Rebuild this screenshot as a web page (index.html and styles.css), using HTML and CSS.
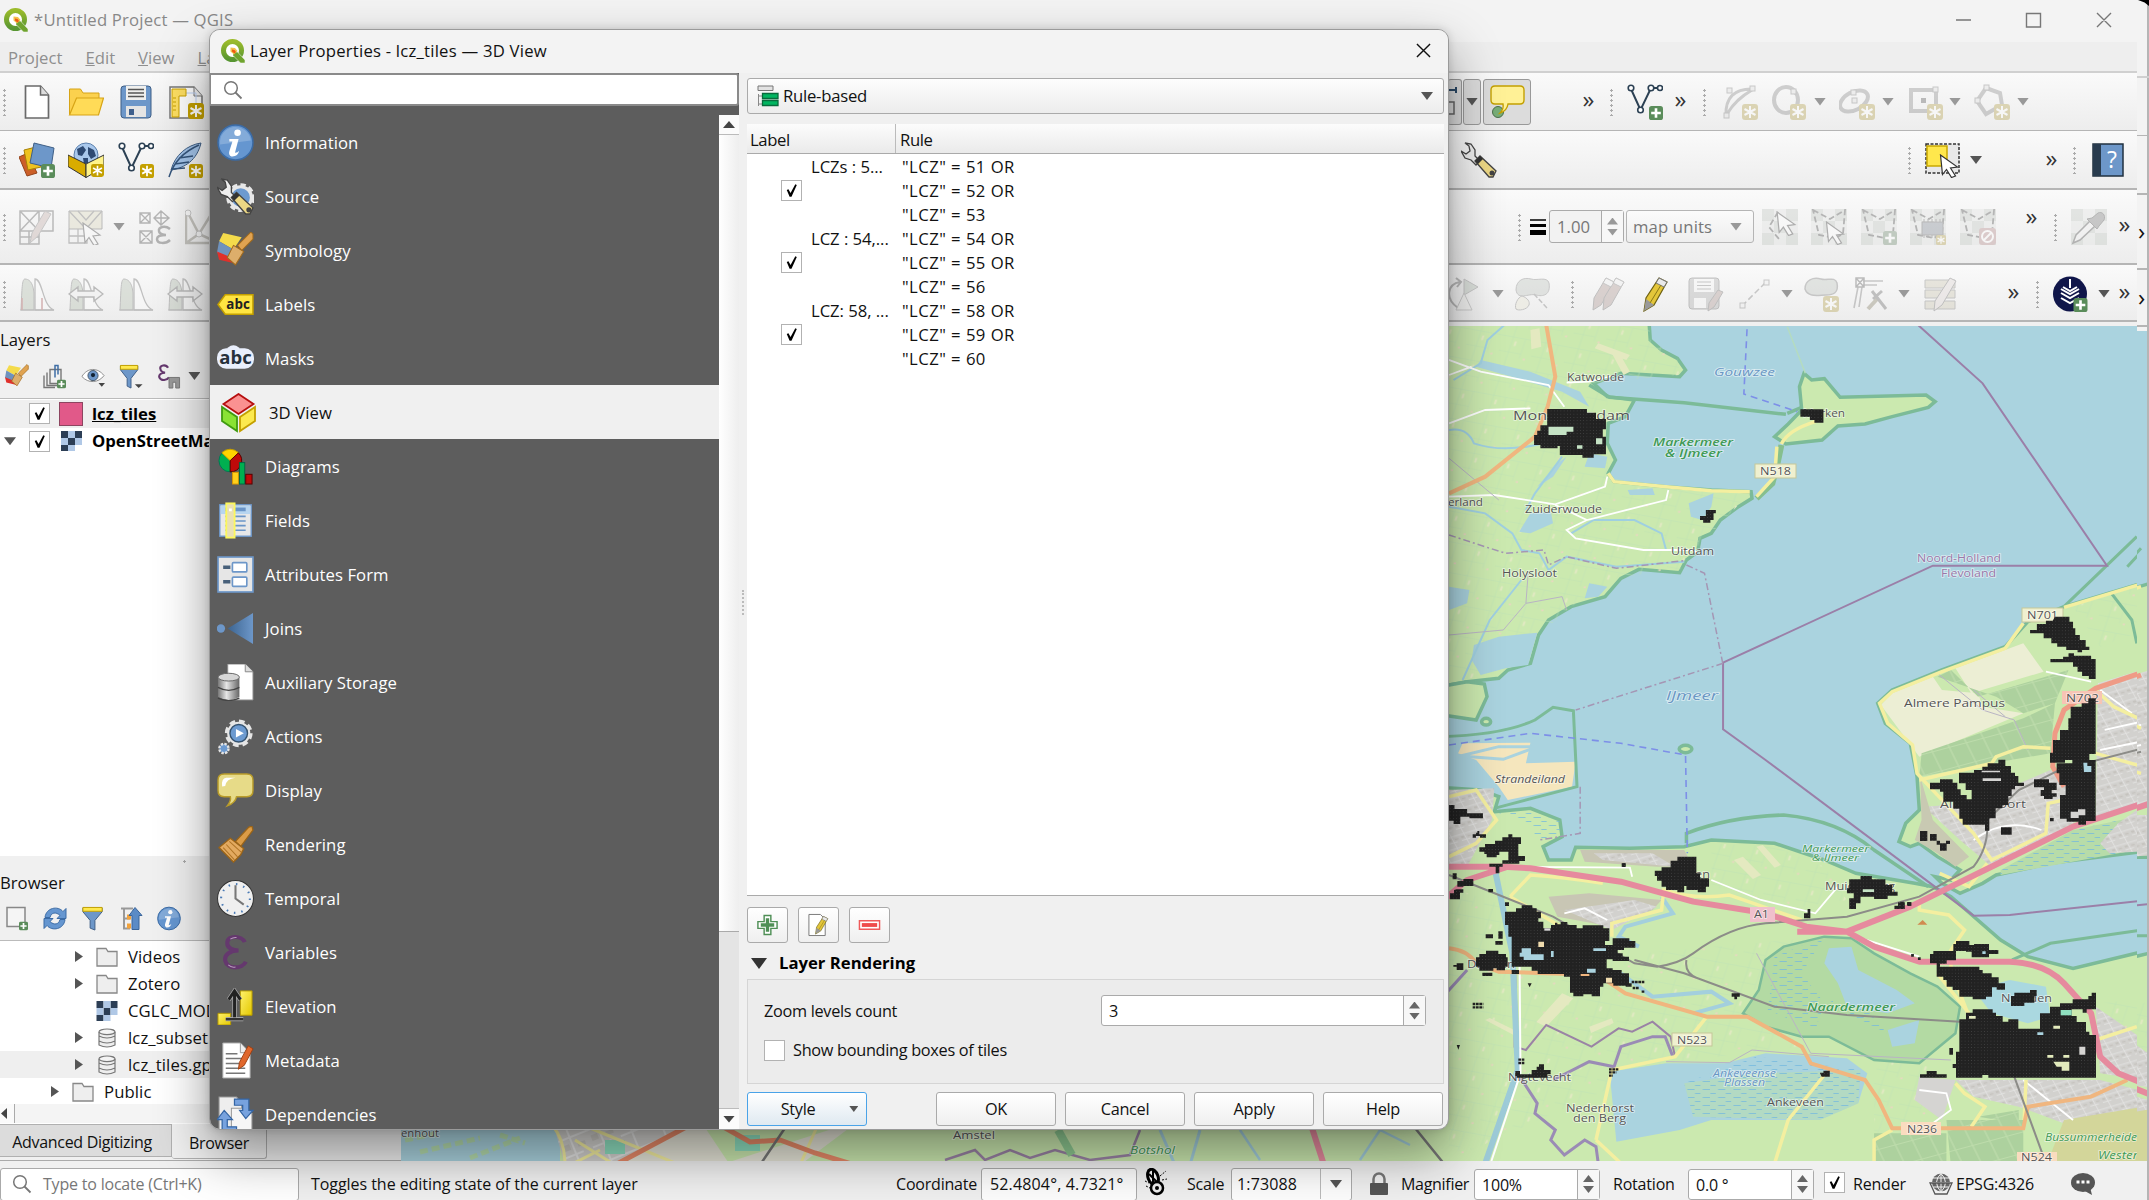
FILE: index.html
```html
<!DOCTYPE html>
<html lang="en">
<head>
<meta charset="utf-8">
<title>QGIS - Layer Properties</title>
<link rel="stylesheet" href="styles.css">
</head>
<body>
<svg class="defs" width="0" height="0">
  <defs>
    <linearGradient id="gMetal" x1="0" x2="1"><stop offset="0" stop-color="#777"/><stop offset=".4" stop-color="#e6e6e6"/><stop offset="1" stop-color="#666"/></linearGradient>
    <linearGradient id="gJoin" x1="0" x2="1"><stop offset="0" stop-color="#3c6490"/><stop offset="1" stop-color="#6d97c9"/></linearGradient>
    <linearGradient id="gYel" x1="0" x2="1" y1="0" y2="1"><stop offset="0" stop-color="#fff16b"/><stop offset="1" stop-color="#e3c800"/></linearGradient>
    <linearGradient id="gQ" x1="0" x2="0" y1="0" y2="1"><stop offset="0" stop-color="#9bbb2b"/><stop offset="1" stop-color="#589632"/></linearGradient>

    <symbol id="qgis" viewBox="0 0 24 24"><ellipse cx="11.500" cy="11.500" rx="9" ry="9" fill="#fff" stroke="url(#gQ)" stroke-width="5"/><path d="M12 13h4.500l7.500 8v3h-4.500L12 16.500z" fill="#6fa32e" stroke="#fff" stroke-width=".5"/><path d="M9.500 8.500l4.500.5 2.500 3-3.500 3.500-3.500-3z" fill="#f3c04c"/><path d="M11 10.500l2.500.5 1.500 2-1.500 1.500-2.500-2z" fill="#ee5a13"/></symbol>
    <symbol id="star" viewBox="0 0 16 16"><rect width="16" height="16" rx="3" fill="#c4a000"/><path d="M8 2v12M2.500 5l11 6M13.500 5l-11 6" stroke="#fff" stroke-width="2"/></symbol>
    <symbol id="plus" viewBox="0 0 16 16"><rect width="16" height="16" rx="3" fill="#5a8c5a"/><path d="M8 2.500v11M2.500 8h11" stroke="#fff" stroke-width="3"/></symbol>

    <symbol id="new" viewBox="0 0 36 36"><path d="M6.500 2h15l8 9v23h-23z" fill="#fff" stroke="#6a6a6a" stroke-width="1.700"/><path d="M21.500 2v9h8" fill="#ddd" stroke="#6a6a6a" stroke-width="1.500"/></symbol>
    <symbol id="open" viewBox="0 0 36 36"><path d="M1.500 30V5h11l2.500 4h16v6" fill="#fbd14e" stroke="#d7a416"/><path d="M1.500 31l7-17h27l-5 17z" fill="#ffdb57" stroke="#d7a416" stroke-width="1.200"/></symbol>
    <symbol id="save" viewBox="0 0 36 36"><rect x="3" y="2" width="30" height="32" rx="3" fill="#6d97c9" stroke="#3f5f86"/><path d="M8 2h20v14h-20z" fill="#f0f0ee"/><path d="M10 5.500h16M10 9h16M10 12.500h16" stroke="#555" stroke-width="1.300"/><rect x="8" y="22" width="20" height="11" fill="#e4e4e4"/><rect x="11" y="25" width="5" height="6" fill="#3e5f8c"/></symbol>
    <symbol id="layout" viewBox="0 0 36 36"><path d="M2 3h24l8 9v22h-32z" fill="#fff" stroke="#777" stroke-width="1.500"/><path d="M26 3v9h8" fill="#eee" stroke="#777"/><path d="M8 9h20v18" fill="none" stroke="#bcd1f5"/><path d="M4 5h14v7h-7v21h-7z" fill="#ffe063" stroke="#c9a000"/><path d="M5 14h3M5 18h3M5 22h3M5 26h3" stroke="#c9a000"/><use href="#star" x="20" y="19" width="16" height="16"/></symbol>
    <symbol id="dsm" viewBox="0 0 36 36"><path d="M0 15l9-4 9 20-10 3z" fill="#cc5f28" stroke="#94431a"/><path d="M5 8l12-3 5 20-13 3z" fill="#eec21f" stroke="#a88206"/><path d="M15 1l20 5-3 20-21-5z" fill="#6d97c9" stroke="#3f5f86"/><use href="#plus" x="22" y="22" width="14" height="14"/></symbol>
    <symbol id="gpkg" viewBox="0 0 36 36"><circle cx="18" cy="13" r="12" fill="#a9c8ec" stroke="#5c80ac"/><path d="M9 7l6-3 3 4-4 6-4-1zM20 5l6 3 2 6-5 3-3-5zM15 16l5 0 0 5-4 1z" fill="#2e4a73"/><path d="M0 13l18 9v13.500l-18-11z" fill="#d9ac00" stroke="#333"/><path d="M18 22l18-9v12l-18 10.500z" fill="#fff38b" stroke="#333"/><use href="#star" x="23" y="22" width="13" height="13"/></symbol>
    <symbol id="vee" viewBox="0 0 36 36"><path d="M4 5l9.500 21L24 4h9" fill="none" stroke="#2c4154" stroke-width="2"/><g fill="#fff" stroke="#2c4154" stroke-width="1.600"><circle cx="4" cy="4" r="2.800"/><circle cx="13.500" cy="26" r="2.800"/><circle cx="24" cy="4" r="2.800"/><circle cx="33" cy="4" r="2.500"/></g></symbol>
    <symbol id="newshp" viewBox="0 0 36 36"><use href="#vee"/><use href="#star" x="22" y="22" width="14" height="14"/></symbol>
    <symbol id="veeplus" viewBox="0 0 36 36"><use href="#vee"/><use href="#plus" x="22" y="22" width="14" height="14"/></symbol>
    <symbol id="feather" viewBox="0 0 36 36"><path d="M34 1C20 3 8 13 4 28c14-2 26-10 30-27z" fill="#a3c4ea" stroke="#3f5f86"/><path d="M2 35C6 22 16 10 32 3M8 22l14-2M12 16l14-2M6 27l12-1" fill="none" stroke="#35557c" stroke-width="1.500"/><use href="#star" x="22" y="22" width="14" height="14"/></symbol>
    <symbol id="pen" viewBox="0 0 36 36"><path d="M22 2l8 4-13 23-10 6 2-13z" fill="#e4c63a" stroke="#6e6112" stroke-width="1.200"/><path d="M22 2l8 4-3 5-8-4z" fill="#e9e9e9" stroke="#777"/><path d="M9 23l8 6-10 6z" fill="#999"/><path d="M24 9L13 27" stroke="#8c7a17"/></symbol>
    <symbol id="meshedit" viewBox="0 0 36 36"><path d="M1 2h33v20h-14v13h-19zM1 2l19 20M20 2L1 22h19V2M1 28h19M10 22v13" fill="none" stroke="#555" stroke-width="1.500"/><path d="M26 2l6 3-13 22-8 7 2-10z" fill="#cfa9a0" stroke="#777"/></symbol>
    <symbol id="cursor" viewBox="0 0 20 24"><path d="M1 1l17 12-7 1 5 8-4 1.500-5-8-4 5z" fill="#fff" stroke="#333" stroke-width="1.200"/></symbol>
    <symbol id="meshsel" viewBox="0 0 36 36"><path d="M1 2h33v18h-33z" fill="#ddd6a4" stroke="#555"/><path d="M1 2l17 18L34 2M10 2l8 9 8-9M1 20v14h18V20M1 27h18M10 20v14" fill="none" stroke="#666" stroke-width="1.300"/><use href="#cursor" x="14" y="13" width="20" height="24"/></symbol>
    <symbol id="meshexp" viewBox="0 0 36 36"><path d="M4 4h10v10h-10zl10 10M14 4L4 14M4 22h12v12h-12zl12 12M16 22L4 34M25 2l8 7-8 7-7-7zM18 9h15M25 2v14" fill="none" stroke="#444" stroke-width="1.400"/><path d="M34 20c-5-4-12-2-11 2 0 3 5 4 7 4-4 0-9 1-9 4 0 5 9 5 13 1" fill="none" stroke="#444" stroke-width="2.500"/></symbol>
    <symbol id="meshtri" viewBox="0 0 36 36"><path d="M1 3v31h34V3M3 4l11 21L27 4M1 34l13-9 20 9" fill="none" stroke="#777056" stroke-width="2.500"/><circle cx="3" cy="4" r="3" fill="#fff" stroke="#777"/><circle cx="14" cy="25" r="3" fill="#fff" stroke="#777"/></symbol>
    <symbol id="hist" viewBox="0 0 36 36"><path d="M2 34C3 12 3 3 6 3s8 2 9 14v17z" fill="#a9bfa0" stroke="#666"/><path d="M16 34V3c8 0 7 27 19 31z" fill="#fff" stroke="#666" stroke-width="1.300"/><path d="M1 34h34" stroke="#666"/></symbol>
    <symbol id="histred" viewBox="0 0 36 36"><use href="#hist"/><path d="M3 22v12M23 22v12" stroke="#d33" stroke-width="1.500"/></symbol>
    <symbol id="histarr" viewBox="0 0 36 36"><use href="#hist"/><path d="M1 18l9-7v4h16v-4l9 7-9 7v-4H10v4z" fill="#eee" stroke="#555" stroke-width="1.400"/></symbol>

    <symbol id="callout" viewBox="0 0 36 36"><circle cx="9" cy="28" r="5.500" fill="#77ad77" stroke="#4b6e4b"/><path d="M6 2h25q4 0 4 4v10q0 4-4 4H19q-1 7-8 9 4-4 3-9H6q-4 0-4-4V6q0-4 4-4z" fill="#fff196" stroke="#c4a000" stroke-width="1.400"/></symbol>
    <symbol id="arc" viewBox="0 0 36 36"><path d="M4 32C3 14 12 4 32 5M5 30C12 18 20 12 30 6" fill="none" stroke="#888" stroke-width="3"/><g fill="#ddd" stroke="#777"><rect x="2" y="29" width="5" height="5"/><rect x="5" y="4" width="5" height="5"/><rect x="28" y="2" width="5" height="5"/></g><use href="#star" x="20" y="20" width="16" height="16"/></symbol>
    <symbol id="circ" viewBox="0 0 36 36"><ellipse cx="16" cy="16" rx="12" ry="13" fill="none" stroke="#888" stroke-width="4"/><rect x="21" y="5" width="5" height="5" fill="#ddd" stroke="#777"/><use href="#star" x="20" y="20" width="16" height="16"/></symbol>
    <symbol id="elli" viewBox="0 0 36 36"><ellipse cx="15" cy="17" rx="15" ry="9" transform="rotate(-28 15 17)" fill="none" stroke="#888" stroke-width="4"/><rect x="12" y="6" width="5" height="5" fill="#ddd" stroke="#777"/><rect x="13" y="14" width="5" height="5" fill="#ddd" stroke="#777"/><use href="#star" x="20" y="20" width="16" height="16"/></symbol>
    <symbol id="rct" viewBox="0 0 36 36"><rect x="4" y="6" width="25" height="21" fill="none" stroke="#888" stroke-width="4"/><rect x="14" y="14" width="5" height="5" fill="#555"/><rect x="26" y="3" width="5" height="5" fill="#ddd" stroke="#777"/><use href="#star" x="20" y="20" width="16" height="16"/></symbol>
    <symbol id="pent" viewBox="0 0 36 36"><path d="M12 4l14 5 2 12-16 9-9-13z" fill="none" stroke="#888" stroke-width="4"/><rect x="10" y="1" width="5" height="5" fill="#ddd" stroke="#777"/><rect x="1" y="14" width="5" height="5" fill="#ddd" stroke="#777"/><use href="#star" x="20" y="20" width="16" height="16"/></symbol>
    <symbol id="wrench" viewBox="0 0 36 36"><path d="M4 1l6 1 4 6v6l5 5-4 4-5-5-6-2-4-7 5 3 4-3-1-5z" fill="#eee" stroke="#444" stroke-width="1.300"/><path d="M14 19l5-5 16 15-3 6h-4z" fill="#ecd784" stroke="#444" stroke-width="1.300"/><path d="M14 19l5-5 3 3-5 5z" fill="#333"/><circle cx="31" cy="31" r="2.500" fill="#444"/></symbol>
    <symbol id="select" viewBox="0 0 36 36"><rect x="1" y="2" width="33" height="29" fill="#e8e8e8" stroke="#333" stroke-width="1.500" stroke-dasharray="3 1.500"/><rect x="2" y="4" width="20" height="20" fill="#ffe74c" stroke="#c8a800" stroke-width="1.500"/><use href="#cursor" x="14" y="12" width="21" height="24"/></symbol>
    <symbol id="book" viewBox="0 0 36 36"><rect x="3" y="2" width="30" height="32" fill="#6d97c9" stroke="#20303f" stroke-width="1.500"/><rect x="3" y="2" width="8" height="32" fill="#283b4e"/><text x="22" y="26" font-size="23" text-anchor="middle" fill="#fff">?</text></symbol>
    <symbol id="checker" viewBox="0 0 36 36"><path d="M0 0h12v12H0zM24 0h12v12H24zM12 12h12v12H12zM0 24h12v12H0zM24 24h12v12H24z" fill="#bcc6bc"/><path d="M12 0h12v12H12zM0 12h12v12H0zM24 12h12v12H24zM12 24h12v12H12z" fill="#dfe3df"/></symbol>
    <symbol id="tri1" viewBox="0 0 36 36"><use href="#checker"/><path d="M16 3L7 18l10 12" fill="none" stroke="#444" stroke-width="1.800" stroke-dasharray="6 3"/><use href="#cursor" x="14" y="2" width="21" height="25"/></symbol>
    <symbol id="quad" viewBox="0 0 36 36"><use href="#checker"/><path d="M2 1l17 9L34 1l-2 24-8 4-16-3z" fill="none" stroke="#444" stroke-width="1.800" stroke-dasharray="6 3"/></symbol>
    <symbol id="quadsel" viewBox="0 0 36 36"><use href="#quad"/><use href="#cursor" x="14" y="12" width="21" height="24"/></symbol>
    <symbol id="quadadd" viewBox="0 0 36 36"><use href="#quad"/><use href="#plus" x="22" y="22" width="14" height="14"/></symbol>
    <symbol id="quadmem" viewBox="0 0 36 36"><use href="#quad"/><rect x="12" y="13" width="21" height="13" fill="#7a869b" stroke="#555"/><path d="M14 10v19M18 10v19M22 10v19M26 10v19M30 10v19" stroke="#555" stroke-dasharray="3 13"/><use href="#star" x="26" y="26" width="10" height="10"/></symbol>
    <symbol id="quaddel" viewBox="0 0 36 36"><use href="#quad"/><rect x="19" y="19" width="17" height="17" rx="3" fill="#cc7f7f"/><circle cx="27.500" cy="27.500" r="5.500" fill="none" stroke="#fff" stroke-width="2"/><path d="M24 31l7-7" stroke="#fff" stroke-width="2"/></symbol>
    <symbol id="dropper" viewBox="0 0 36 36"><use href="#checker"/><path d="M2 34l3-8 14-14 5 5L9 31z" fill="#eee" stroke="#444" stroke-width="1.500"/><path d="M16 10l10 10 2-3 5-6c2-5-2-9-6-7l-6 5z" fill="#777" stroke="#444"/></symbol>
    <symbol id="rot" viewBox="0 0 36 36"><path d="M10 32C-4 22 0 8 12 6M8 2l5 4-4 5" fill="none" stroke="#555" stroke-width="2"/><path d="M16 3v16l14-8z" fill="#a9bfa9" stroke="#777"/><path d="M16 17l8 17H8z" fill="#f2f2ec" stroke="#888"/></symbol>
    <symbol id="simp" viewBox="0 0 36 36"><path d="M2 14C2 4 10 1 17 3c6 2 16-3 18 4 2 12-6 14-13 12-8-2-18 6-20-5z" fill="#b8c4b8" stroke="#777"/><path d="M8 20c6 2 8 6 7 9-2 5-11 6-13 4-2-4 2-12 6-13z" fill="#ebe5c4" stroke="#777"/><path d="M20 18l14 15" stroke="#777" stroke-width="1.500" stroke-dasharray="5 2"/></symbol>
    <symbol id="pens" viewBox="0 0 36 36"><path d="M16 2l8 4-13 23-8 5 1-12z" fill="#b98f86" stroke="#666"/><path d="M26 2l8 4-13 23-8 5 1-12z" fill="#b98f86" stroke="#666"/><path d="M16 2l8 4-3 5-8-4zM26 2l8 4-3 5-8-4z" fill="#eee" stroke="#777"/></symbol>
    <symbol id="saveed" viewBox="0 0 36 36"><rect x="1" y="2" width="30" height="31" rx="3" fill="#aaa" stroke="#666"/><path d="M6 3h20v13h-20zM6 22h12v10h-12z" fill="#f6f6f6"/><path d="M9 6h14M9 9.500h14M9 13h14" stroke="#777"/><path d="M30 14l5 2-9 15-6 4 1-8z" fill="#b98f86" stroke="#666"/></symbol>
    <symbol id="node" viewBox="0 0 36 36"><path d="M5 30L28 7" stroke="#777" stroke-width="1.500" stroke-dasharray="6 3"/><rect x="3" y="27" width="5" height="5" fill="#eee" stroke="#777"/><rect x="27" y="4" width="5" height="5" fill="#eee" stroke="#777"/></symbol>
    <symbol id="blob" viewBox="0 0 36 36"><path d="M1 13C1 4 9 1 17 3c6 2 14-3 16 4 2 10-4 12-11 12S4 22 1 13z" fill="#b8c4b8" stroke="#777" stroke-width="1.500"/><use href="#star" x="19" y="20" width="16" height="16"/></symbol>
    <symbol id="vtool" viewBox="0 0 36 36"><path d="M6 11L2 32M10 11l-3 20M11 5h20M11 9h14" fill="none" stroke="#777" stroke-width="1.600"/><path d="M4 2h8v9H4zl8 9M12 2l-8 9" fill="none" stroke="#555" stroke-width="1.500"/><path d="M16 33l10-11" stroke="#8a7f50" stroke-width="4"/><path d="M20 15l14 18M21 23l9-8" stroke="#666" stroke-width="3"/></symbol>
    <symbol id="attr" viewBox="0 0 36 36"><path d="M3 4h30v8H3zM3 14h30v8H3zM3 25h30v8H3z" fill="#cfc79c" stroke="#777"/><path d="M28 2l6 3-14 24-8 6 1-10z" fill="#e2d3cf" stroke="#666"/></symbol>
    <symbol id="meshhub" viewBox="0 0 36 36"><ellipse cx="17" cy="18" rx="17" ry="17.500" fill="#10164a"/><path d="M10 11l7 4 7-4M17 3v9M8 17l9 5 9-5M8 22l9 5 9-5M8 13l9 5 9-5" fill="none" stroke="#fff" stroke-width="2"/><use href="#plus" x="20" y="22" width="15" height="14"/></symbol>

    <symbol id="info" viewBox="0 0 36 36"><circle cx="18" cy="18" r="17" fill="#6596d0" stroke="#3b6ba5" stroke-width="1.500"/><path d="M3 20a15 15 0 0 1 30-4z" fill="#fff" opacity=".2"/><circle cx="20" cy="8.500" r="3.200" fill="#fff"/><path d="M12 14.500h9l-3.500 13.500q3 0 4-2-1 6-7.500 5.500-3-1-2-5l3-9.500h-3z" fill="#fff"/></symbol>
    <symbol id="source" viewBox="0 0 36 36"><circle cx="23" cy="19" r="12" fill="#e7e7e7" stroke="#e7e7e7" stroke-width="4" stroke-dasharray="5 3"/><circle cx="23" cy="19" r="9" fill="#6c9ad0"/><use href="#wrench" x="0" y="0" width="36" height="36"/></symbol>
    <symbol id="symb" viewBox="0 0 36 36"><path d="M6 1l18 4-8 12L2 9z" fill="#f4db4b"/><path d="M2 9l14 8-6 9-10-6z" fill="#6f92bd"/><path d="M0 19l17 7 2 5-17-4z" fill="#e0302b"/><path d="M35 2l-2-2-13 13 4 5L35 7z" fill="#e0a351" stroke="#a26a1c"/><path d="M16 13l10 6-8 13-8-7z" fill="#ddae6b" stroke="#a26a1c"/></symbol>
    <symbol id="labels" viewBox="0 0 36 36"><path d="M8 8.500h27v19H8L1 18z" fill="#ffe542" stroke="#c4a000" stroke-width="1.500"/><text x="20.500" y="22.500" font-size="13" font-weight="700" text-anchor="middle" fill="#222">abc</text></symbol>
    <symbol id="masks" viewBox="0 0 36 36"><rect x="0" y="8" width="36" height="20" rx="9" fill="#e9effc"/><circle cx="16" cy="12" r="7" fill="#e9effc"/><text x="18" y="23.500" font-size="18" font-weight="700" text-anchor="middle" fill="#26313c">abc</text></symbol>
    <symbol id="cube" viewBox="0 0 36 40"><path d="M18 1l15 10-15 10L3 11z" fill="#fa9191" stroke="#b60e0e" stroke-width="1.800"/><path d="M1.500 14l15 10v14l-15-10z" fill="#8ae234" stroke="#3f9a10" stroke-width="1.800"/><path d="M34.500 14l-15 10v14l15-10z" fill="#fce94f" stroke="#c4a000" stroke-width="1.800"/></symbol>
    <symbol id="diag" viewBox="0 0 36 38"><circle cx="12.500" cy="13" r="11.500" fill="#00b050" stroke="#075"/><path d="M12.500 13L4 5a11.500 11.500 0 0 1 17 0z" fill="#ffd400" stroke="#c90"/><path d="M12.500 13L21 5a11.500 11.500 0 0 1-8.500 19.500z" fill="#bf0a0a" stroke="#500"/><rect x="15" y="25" width="6" height="12" fill="#ffd11a" stroke="#d90"/><rect x="22" y="15" width="5.500" height="22" fill="#00b050" stroke="#064"/><rect x="28.500" y="27" width="6.500" height="10" fill="#bf0a0a" stroke="#500"/></symbol>
    <symbol id="fields" viewBox="0 0 36 40"><rect x="1" y="3" width="34" height="34" fill="#e8e8e8" stroke="#6d97c9" stroke-width="1.500"/><rect x="2" y="4" width="32" height="9" fill="#b7d5f0"/><path d="M7 8h22" stroke="#6a95c8" stroke-width="4"/><path d="M7 15.500h22M7 20.500h22M7 25.500h22M7 30.500h22" stroke="#6a95c8" stroke-width="1.800"/><rect x="8" y="1.500" width="9" height="37" fill="#e9e0b5" stroke="#fcf75c" stroke-width="2"/><rect x="11" y="7" width="3" height="3" fill="#fff"/></symbol>
    <symbol id="form" viewBox="0 0 36 36"><rect x="1" y="1" width="34" height="34" fill="#e6e6e6" stroke="#6d97c9" stroke-width="1.600"/><path d="M6 11h7M6 25h7" stroke="#47607a" stroke-width="3.500"/><rect x="15" y="6.500" width="14" height="9" rx="1" fill="#fff" stroke="#6d97c9" stroke-width="1.600"/><rect x="15" y="20.500" width="14" height="9" rx="1" fill="#fff" stroke="#6d97c9" stroke-width="1.600"/></symbol>
    <symbol id="joins" viewBox="0 0 38 36"><circle cx="4" cy="18" r="4.300" fill="#6d97c9"/><path d="M11 18L37 2v32z" fill="url(#gJoin)"/></symbol>
    <symbol id="aux" viewBox="0 0 38 38"><path d="M11 0h18l8 8v29H11z" fill="#fff" stroke="#888"/><path d="M29 0v8h8" fill="#ddd" stroke="#888"/><path d="M1 14v20q11 6 22 0V14z" fill="url(#gMetal)"/><path d="M1 24q11 6 22 0M1 35q11 5 22 0" fill="none" stroke="#444" stroke-width="1.300"/><ellipse cx="12" cy="13.500" rx="11" ry="4" fill="#d6d6d6" stroke="#666"/></symbol>
    <symbol id="actions" viewBox="0 0 38 40"><circle cx="22.500" cy="16.500" r="12.500" fill="#e5e5e5" stroke="#e5e5e5" stroke-width="5" stroke-dasharray="5.800 4"/><circle cx="22.500" cy="16.500" r="9.500" fill="#6c9ad0" stroke="#34526f" stroke-width="1.500"/><path d="M19.500 12l8.500 4.500-8.500 4.500z" fill="#fff"/><circle cx="6.500" cy="33" r="5" fill="#6c9ad0" stroke="#e5e5e5" stroke-width="2.600" stroke-dasharray="2.600 1.300"/></symbol>
    <symbol id="display" viewBox="0 0 36 36"><path d="M7 2h22q6 0 6 6v10q0 6-6 6H19q-1 6-9 9 4-5 3-9H7q-6 0-6-6V8q0-6 6-6z" fill="#e7db88" stroke="#b99c2a" stroke-width="1.400"/><path d="M5 14q-1-8 4-8.500h9q-9 1-10 8z" fill="#fff"/></symbol>
    <symbol id="render" viewBox="0 0 36 36"><path d="M34 0l-3 1-13 14 5 5L35 4z" fill="#db9c47" stroke="#9a6418" stroke-width="1.300"/><path d="M13 12l13 10-3 6-7 7L2 21z" fill="#e3aa60" stroke="#9a6418" stroke-width="1.300"/><path d="M6 21l11 12M9 18l11 12M12 15l12 11" stroke="#b07526"/></symbol>
    <symbol id="clock" viewBox="0 0 36 36"><circle cx="18" cy="18" r="17.500" fill="#efefef" stroke="#333"/><circle cx="18" cy="18" r="14" fill="none" stroke="#4a7ab5" stroke-width="2" stroke-dasharray="1.500 5.830"/><path d="M18 5v13l8 6" fill="none" stroke="#777" stroke-width="2"/></symbol>
    <symbol id="eps" viewBox="0 0 36 36"><path d="M27 8c-2-6-17-8-17 1 0 5 6 7 11 7-8 0-14 4-13 10 2 9 17 8 20 1" fill="none" stroke="#65386e" stroke-width="4"/><path d="M13 5q3-2 6-1.500M11 30q3 3 7 2" fill="none" stroke="#b79abd"/></symbol>
    <symbol id="elev" viewBox="0 0 36 38"><path d="M0 26h13v12H0z" fill="url(#gYel)" stroke="#b39700"/><path d="M23 3h12v25H23z" fill="url(#gYel)" stroke="#b39700"/><path d="M17 30V6M11 12l6-9 6 9M8 32h18" fill="none" stroke="#aaa" stroke-width="4.500"/><path d="M17 30V6M11 12l6-9 6 9" fill="none" stroke="#222" stroke-width="3"/><path d="M8 32h18" stroke="#333" stroke-width="2.500"/></symbol>
    <symbol id="meta" viewBox="0 0 36 38"><path d="M5 1h18l10 10v26H5z" fill="#fff" stroke="#aaa"/><path d="M23 1v10h8" fill="#eee" stroke="#999"/><path d="M8 12h12M8 17h20M8 22h14M8 27h20M8 32h20" stroke="#777" stroke-width="1.500"/><path d="M31 4l5 3-9 17-6 4 1-7z" fill="#e0672c" stroke="#a04010"/></symbol>
    <symbol id="deps" viewBox="0 0 36 36"><path d="M2 1h17l5 6v29H2z" fill="#eee" stroke="#999"/><path d="M14 12h15l5 5v19H14z" fill="#f6f6f6" stroke="#999"/><path d="M17 3h14v11h4l-7 8-6-8h3V9h-8zM5 36V23H0l7-9 8 9h-5v7h9v6z" fill="#77a2de" stroke="#3465a4" stroke-width="1.200"/></symbol>

    <symbol id="group" viewBox="0 0 24 24"><path d="M7 5h11v14H7zM4 8v13h11M1 11v12h11" fill="none" stroke="#777" stroke-width="1.400"/><path d="M12 13V1h3v9" fill="none" stroke="#3f6ea5" stroke-width="1.500"/><use href="#plus" x="14" y="15" width="9" height="9"/></symbol>
    <symbol id="eye" viewBox="0 0 26 24"><path d="M1 12C7 2 18 2 25 11c-6 8-17 9-24 1z" fill="#fff" stroke="#888"/><circle cx="13" cy="11" r="5.500" fill="#6d97c9" stroke="#456"/><circle cx="13" cy="10.500" r="2.300" fill="#123"/><path d="M19 19h7l-3.500 4z" fill="#444"/></symbol>
    <symbol id="filter" viewBox="0 0 24 26"><path d="M1.500 2h20v4l-7.500 9v10l-5-2v-8l-7.500-9z" fill="#6d97c9" stroke="#3f5f86"/><path d="M1.500 1.500h20v4h-20z" fill="#ffe94e" stroke="#c4a000"/></symbol>
    <symbol id="filterm" viewBox="0 0 24 26"><path d="M1 2h18v4l-7 9v10l-4-2v-8L1 6z" fill="#6d97c9" stroke="#3f5f86"/><path d="M1 1.500h18v4H1z" fill="#ffe94e" stroke="#c4a000"/><path d="M16 21h8l-4 4z" fill="#444"/></symbol>
    <symbol id="epsf" viewBox="0 0 24 26"><path d="M11 4C9 0 2 1 3 5c0 3 4 4 5 4-4 0-7 2-6 5 2 4 8 3 10 0" fill="none" stroke="#65386e" stroke-width="2.200"/><path d="M12 14h11v11h-4v-6h-3v6h-4z" fill="#999" stroke="#777"/></symbol>
    <symbol id="addl" viewBox="0 0 24 24"><path d="M2 1h18v19H2z" fill="#f5f5f5" stroke="#888" stroke-width="1.500"/><use href="#plus" x="14" y="15" width="9" height="9"/></symbol>
    <symbol id="refresh" viewBox="0 0 24 24"><path d="M2 11C3 1 15-1 20 5l3-3v10h-9l3-3c-4-4-9-3-10 2zM22 13c-1 10-13 12-18 6l-3 3V12h9l-3 3c4 4 9 3 10-2z" fill="#6596d0" stroke="#3b6ba5"/></symbol>
    <symbol id="collapse" viewBox="0 0 24 24"><path d="M2 2h12M5 2v20h6M5 12h6" fill="none" stroke="#999" stroke-width="2"/><path d="M8 8h4v5H8zM8 17h4v5H8z" fill="#f3a33c"/><path d="M13 23V9h-3l6-8 7 8h-3v14z" fill="#5b8bc6" stroke="#3a659b"/></symbol>
    <symbol id="raster" viewBox="0 0 21 20"><path d="M0 0h7v7H0zM14 0h7v7h-7zM7 7h7v7H7zM0 14h7v6H0z" fill="#2c3e55"/><path d="M7 0h7v7H7zM14 7h7v7h-7zM0 7h7v7H0zM7 14h7v6H7z" fill="#b0c8e6"/></symbol>
    <symbol id="folder" viewBox="0 0 22 20"><path d="M1 19V1.500h9l2 3h9V19z" fill="#eee" stroke="#888" stroke-width="1.300"/></symbol>
    <symbol id="db" viewBox="0 0 22 20"><path d="M3 4v13q8 4 16 0V4M3 8q8 4 16 0M3 13q8 4 16 0" fill="#eee" stroke="#777" stroke-width="1.200"/><ellipse cx="11" cy="3.800" rx="8" ry="2.800" fill="#f4f4f4" stroke="#777" stroke-width="1.200"/></symbol>
    <symbol id="mag" viewBox="0 0 20 20"><circle cx="8" cy="8" r="6.300" fill="none" stroke="#777" stroke-width="1.500"/><path d="M12.500 12.500l6 6" stroke="#777" stroke-width="1.800"/></symbol>
    <symbol id="tick" viewBox="0 0 20 20"><path d="M5 9.500l1.800-.8 2.200 4L14 3.500l1.600.6L10 16.500H8z" fill="#000"/></symbol>
    <symbol id="rule" viewBox="0 0 22 22"><path d="M1 1h15v4.500H1z" fill="#e2e2e2" stroke="#777"/><path d="M1.500 9v12M1 11h4M1 19h4" fill="none" stroke="#888"/><path d="M5.500 8.500h15.500v5H5.500zM5.500 15.500h15.500v5H5.500z" fill="#00b560" stroke="#086b3c" stroke-width="1.300"/></symbol>
    <symbol id="bug" viewBox="0 0 24 28"><ellipse cx="9" cy="9" rx="5" ry="8" transform="rotate(-20 9 9)" fill="#fff" stroke="#000" stroke-width="3"/><path d="M9 3v12M5 6l8 8" stroke="#000" stroke-width="2"/><circle cx="13" cy="20" r="6" fill="#eee" stroke="#000" stroke-width="2.500"/><circle cx="13" cy="20" r="2" fill="#000"/><path d="M16 8l6-5M18 12l5-1M1 13l4 2M2 18l4 2" stroke="#000" stroke-dasharray="2 1.500"/></symbol>
    <symbol id="lock" viewBox="0 0 20 24"><path d="M4.500 12V7a5.500 5.500 0 0 1 11 0v5" fill="none" stroke="#777" stroke-width="2.500"/><rect x="1" y="11" width="18" height="12" rx="1" fill="#555"/></symbol>
    <symbol id="globe" viewBox="0 0 24 22"><circle cx="12" cy="9.500" r="9" fill="#666"/><path d="M1 9.500h22M4 5h16M4 14h16M12 0v19M12 .5Q3 9 12 19M12 .5q9 9 0 18.500" fill="none" stroke="#eee"/><path d="M1 10h22l-5 11H6z" fill="none" stroke="#555" stroke-width="1.300"/></symbol>
    <symbol id="chat" viewBox="0 0 24 22"><ellipse cx="12" cy="9.500" rx="12" ry="9.500" fill="#555"/><path d="M12 17l9 5-2-8z" fill="#555"/><path d="M5.500 9h3M10.500 9h3M15.500 9h3" stroke="#fff" stroke-width="3"/></symbol>
    <pattern id="dots3" width="9.700" height="9.700" patternUnits="userSpaceOnUse"><rect width="9.700" height="9.700" fill="#222"/><rect width="2.400" height="2.400" fill="#454545"/></pattern>
    <pattern id="dotsM" width="7.200" height="9.700" patternUnits="userSpaceOnUse"><rect width="7.200" height="9.700" fill="#222"/><rect width="1.800" height="2.400" fill="#454545"/></pattern>
    <pattern id="lines" width="74" height="90" patternUnits="userSpaceOnUse" patternTransform="rotate(14)"><path d="M0 10h74M22 0v90M50 10v60M0 56h50" stroke="#bfe2b4" stroke-width="1.300" fill="none"/><rect x="28" y="22" width="5" height="14" fill="#dfe9c0"/><rect x="58" y="68" width="5" height="5" fill="#e8d7c0"/></pattern>
    <pattern id="marsh" width="34" height="24" patternUnits="userSpaceOnUse"><path d="M3 5h16M20 16h12" stroke="#74b9df" stroke-width="2.500"/></pattern>
    <pattern id="town" width="30" height="36" patternUnits="userSpaceOnUse" patternTransform="rotate(-22)"><rect width="30" height="36" fill="#d2d1ce"/><path d="M0 8h30M12 0v36M0 26h20" stroke="#e4e4e3" stroke-width="2"/><path d="M2 14h7v6H2zM17 16h8v4h-8z" fill="#c6c4bf"/></pattern>
    <pattern id="wood" width="40" height="60" patternUnits="userSpaceOnUse" patternTransform="rotate(-20)"><rect width="40" height="60" fill="#add19e"/><path d="M0 30h40M20 0v60" stroke="#bddcab" stroke-width="3"/></pattern>
  </defs>
</svg>

<div class="window">
  <header class="titlebar">
    <svg class="logo"><use href="#qgis"/></svg><span class="t-title">*Untitled Project — QGIS</span>
    <svg class="winbtns" viewBox="0 0 160 20"><path d="M2 10h15M72.500 3.500h14v13.500h-14zM143 3l14 14M157 3l-14 14" fill="none" stroke="#777" stroke-width="1.400"/></svg>
  </header>
  <nav class="menubar"><span>Project</span><span><u>E</u>dit</span><span><u>V</u>iew</span><span><u>L</u>ayer</span></nav>

  <div class="toolbar r1">
    <div class="tleft"><i class="handle"></i><svg class="ic m11"><use href="#new"/></svg><svg class="ic m13"><use href="#open"/></svg><svg class="ic m14"><use href="#save"/></svg><svg class="ic m14"><use href="#layout"/></svg></div>
    <div class="tright">
      <span class="press pcut"><svg viewBox="0 0 14 40"><path d="M0 8h8M8 5v6" stroke="#2c4a68" stroke-width="2"/><path d="M0 20h6v12H0" fill="none" stroke="#666" stroke-width="1.500"/></svg></span>
      <span class="press parr m1"><i class="arr"></i></span><span class="press pcall m2"><svg class="ic"><use href="#callout"/></svg></span>
      <b class="more m51">»</b><i class="handle m13"></i><svg class="ic m12"><use href="#veeplus"/></svg><b class="more m11">»</b><i class="handle m14"></i>
      <svg class="ic off m14"><use href="#arc"/></svg><svg class="ic off m12"><use href="#circ"/></svg><i class="arr g m8"></i><svg class="ic off m13"><use href="#elli"/></svg><i class="arr g m7"></i><svg class="ic off m13"><use href="#rct"/></svg><i class="arr g m6"></i><svg class="ic off m13"><use href="#pent"/></svg><i class="arr g m7"></i>
    </div>
  </div>
  <div class="toolbar r2">
    <div class="tleft"><i class="handle"></i><svg class="ic m11"><use href="#dsm"/></svg><svg class="ic m13"><use href="#gpkg"/></svg><svg class="ic m14"><use href="#newshp"/></svg><svg class="ic m13"><use href="#feather"/></svg></div>
    <div class="tright"><svg class="ic m13"><use href="#wrench"/></svg><i class="handle m410"></i><svg class="ic m12"><use href="#select"/></svg><i class="arr m9"></i><b class="more m63">»</b><i class="handle m13"></i><svg class="ic m12"><use href="#book"/></svg></div>
  </div>
  <div class="toolbar r3">
    <div class="tleft"><i class="handle"></i><svg class="ic off m11"><use href="#meshedit"/></svg><svg class="ic off m13"><use href="#meshsel"/></svg><i class="arr g m9"></i><svg class="ic off m11"><use href="#meshexp"/></svg><svg class="ic off m13"><use href="#meshtri"/></svg></div>
    <div class="tright"><i class="handle m69"></i><svg class="bars m7" viewBox="0 0 16 18"><path d="M0 2h16" stroke="#000" stroke-width="1.500"/><path d="M0 7.500h16" stroke="#000" stroke-width="3"/><path d="M0 14.500h16" stroke="#000" stroke-width="5"/></svg>
      <span class="spin dim sp1 m3"><span>1.00</span><i class="ud"></i></span><span class="combo dim m2"><span>map units</span><i class="arr g"></i></span>
      <svg class="ic off m8"><use href="#tri1"/></svg><svg class="ic off m13"><use href="#quadsel"/></svg><svg class="ic off m14"><use href="#quadadd"/></svg><svg class="ic off m13"><use href="#quadmem"/></svg><svg class="ic off m14"><use href="#quaddel"/></svg><b class="more up m29">»</b><i class="handle m14"></i><svg class="ic off m12"><use href="#dropper"/></svg><b class="more m11">»</b></div>
  </div>
  <div class="toolbar r4">
    <div class="tleft"><i class="handle"></i><svg class="ic off m11"><use href="#histred"/></svg><svg class="ic off m13"><use href="#histarr"/></svg><svg class="ic off m14"><use href="#hist"/></svg><svg class="ic off m13"><use href="#histarr"/></svg></div>
    <div class="tright"><svg class="ic off"><use href="#rot"/></svg><i class="arr g m8"></i><svg class="ic off m10"><use href="#simp"/></svg><i class="handle m20"></i><svg class="ic off m14"><use href="#pens"/></svg><svg class="ic m11"><use href="#pen"/></svg><svg class="ic off m15"><use href="#saveed"/></svg><svg class="ic off m13"><use href="#node"/></svg><i class="arr g m8"></i><svg class="ic off m11"><use href="#blob"/></svg><svg class="ic off m12"><use href="#vtool"/></svg><i class="arr g m10"></i><svg class="ic off m12"><use href="#attr"/></svg><b class="more m49">»</b><i class="handle m14"></i><svg class="ic m12"><use href="#meshhub"/></svg><i class="arr m9"></i><b class="more m8">»</b></div>
  </div>

  <main class="work">
    <aside class="dock">
      <h2 class="ph lay">Layers</h2>
      <div class="ptools"><svg><use href="#symb"/></svg><svg><use href="#group"/></svg><svg><use href="#eye"/></svg><svg><use href="#filterm"/></svg><svg><use href="#epsf"/></svg><i class="arr"></i></div>
      <div class="layers">
        <div class="lrow sel"><i class="exp"></i><span class="cb"><svg><use href="#tick"/></svg></span><i class="swatch"></i><b><u>lcz_tiles</u></b></div>
        <div class="lrow"><i class="exp down"></i><span class="cb"><svg><use href="#tick"/></svg></span><svg class="ras"><use href="#raster"/></svg><b>OpenStreetMap</b></div>
      </div>
      <div class="split"></div>
      <h2 class="ph bro">Browser</h2>
      <div class="ptools btools"><svg><use href="#addl"/></svg><svg><use href="#refresh"/></svg><svg><use href="#filter"/></svg><svg><use href="#collapse"/></svg><svg><use href="#info"/></svg></div>
      <div class="tree">
        <div class="trow"><i class="tri"></i><svg><use href="#folder"/></svg>Videos</div>
        <div class="trow"><i class="tri"></i><svg><use href="#folder"/></svg>Zotero</div>
        <div class="trow"><i class="tri none"></i><svg><use href="#raster"/></svg>CGLC_MODIS</div>
        <div class="trow"><i class="tri"></i><svg><use href="#db"/></svg>lcz_subset.gpkg</div>
        <div class="trow sel"><i class="tri"></i><svg><use href="#db"/></svg>lcz_tiles.gpkg</div>
        <div class="trow out"><i class="tri"></i><svg><use href="#folder"/></svg>Public</div>
        <div class="hscroll"><span></span></div>
      </div>
      <div class="tabs"><span class="tab">Advanced Digitizing</span><span class="tab on">Browser</span></div>
    </aside>

    <svg class="map" viewBox="401 326 1748 835" preserveAspectRatio="none">
      <g id="mapall">
      <rect x="401" y="320" width="1760" height="850" fill="#aad3df"/>
      <g transform="translate(1440 320) scale(.45217 .33333)" class="m">
        <g stroke="#7cbb98" stroke-width="3.500" fill="#cbe9af">
          <path d="M-20 0H462L465 60L490 90L525 115L543 150L530 170L400 160L340 190L370 230L430 240L410 290L372 310L370 370L388 420L372 460L385 485L500 500L600 510L688 515L690 535L660 560L620 600L600 640L575 655L570 695L545 720L530 758L440 748L400 775L365 830L290 860L240 900L218 945L200 1030L150 1050L130 1075L60 1085L-20 1105z"/>
          <path d="M-20 1105L60 1085L98 1092L104 1130L80 1200L-20 1180z"/>
          <path d="M805 160L822 180L850 176L885 232L1075 225L1095 245L1080 262L1000 290L940 312L880 318L845 360L765 372L740 350L770 312L800 270L795 200z"/>
          <path d="M1600 770L1380 860L1300 905L1250 980L1110 1050L1000 1110L968 1150L985 1210L1040 1270L1055 1370L1060 1470L1030 1510L1015 1565L1040 1580L1060 1570L1100 1610L1150 1650L1130 1680L1095 1670L1110 1690L1150 1720L1200 1690L1230 1665L1350 1630L1541 1597H1600z"/>
          <path d="M-20 1400L90 1410L130 1430L120 1475L200 1465L265 1500L270 1550L228 1580L240 1620L290 1620L300 1582L420 1585L540 1580L600 1560L740 1570L850 1620L920 1660L1050 1690L1090 1700L1130 1730L1240 1860L1300 1910L1400 1945L1600 1880V2600H-20z"/>
          <circle cx="102" cy="1205" r="10"/><ellipse cx="543" cy="1287" rx="14" ry="11"/>
        </g>
        <path d="M-20 0H462L465 60L525 115L530 165L340 190L370 230L372 460L500 500L688 515L600 640L570 690L530 750L400 770L290 860L218 945L150 1050L-20 1100zM1400 860L1541 800V940L1460 980zM20 1700L450 1900L850 1850L700 2050L800 2180L500 2230L20 2520zM600 1570L740 1580L850 1640L900 1740L800 1760L600 1700zM960 2200L1080 2240L1120 2400L960 2500z" fill="url(#lines)"/>
        <g fill="#aad3df"><path d="M75 975L130 950L215 938L195 1035L145 1045L90 1065L70 1020z"/><path d="M550 550L605 520L600 560L580 600L555 590z"/><path d="M20 800L65 810L60 850L20 870z"/><path d="M200 580L245 575L250 610L200 640L175 635zM330 790L370 800L350 830L320 835z"/><path d="M280 410L250 470L215 500L260 430zM90 120L200 155L310 215L330 260L270 215L170 175L80 140z"/><path d="M330 400L370 410L365 445L320 440zM415 510L470 505L475 525L420 525z"/></g>
        <g fill="none" stroke="#9fcfe0" stroke-width="2"><path d="M155 0L105 60L90 130L30 180M20 330Q60 320 75 370Q140 400 230 370M20 560L100 580L160 640L180 690L220 700L240 750L280 710L390 740L540 725M270 410L210 520L190 570M180 780L110 900L50 1080M290 640L340 600L430 600L490 640L500 690"/></g>
        <g fill="#e4e9c0"><path d="M200 30l20-5 4 55-22 8zM350 70l70 35-8 15-70-35zM380 100l15-5 25 60-14 10zM650 1620l20-10 40 55-18 12zM700 1580l14-5 40 60-14 8zM270 2020l25 15-60 85-22-14zM330 2120l50-25 4 14-50 30zM100 2100l10-6 60 40-6 12z"/></g>
        <g fill="#f5e6bd"><path d="M50 1270L200 1268L190 1330L300 1325L292 1400L150 1440L130 1400L80 1320L40 1300z"/></g>
        <path d="M130 1280h70v8l-60 30-95-10z" fill="none" stroke="#aad3df" stroke-width="3"/>
        <path d="M1290 970L1140 1045L1175 1120L1335 1055zM1090 1070L1000 1120L975 1155L1060 1310L1290 1180L1200 1160L1190 1120L1110 1110z" fill="#eceed4"/>
        <path d="M1060 1370L1065 1300L1290 1195L1360 1150L1350 1300L1220 1330zM1100 1070L1130 1050L1190 1130L1390 1050L1360 1150L1290 1180L1230 1130z" fill="url(#wood)"/>
        <path d="M1455 1090L1600 1030V1420L1450 1500zM1070 1460L1180 1450L1350 1350L1450 1450L1400 1510L1220 1640L1150 1560z" fill="url(#town)"/>
        <path d="M1240 1650L1400 1530L1540 1490V1590L1240 1665z" fill="#b7dca9"/><path d="M1240 1650L1400 1530L1540 1490V1590L1240 1665z" fill="url(#marsh)"/>
        <path d="M1460 1570L1500 1510L1541 1470H1600V1590L1480 1600z" fill="url(#town)"/>
        <path d="M1062 1370L1065 1500L1050 1560L1100 1600L1140 1640L1170 1610L1090 1500z" fill="#c8c9b2"/>
        <path d="M15 1410L120 1405L115 1500L60 1640L15 1630z" fill="url(#town)"/>
        <path d="M130 1480L200 1470L265 1505L265 1545L215 1560L200 1510z" fill="url(#marsh)"/>
        <path d="M240 1730L330 1720L490 1740L470 1770L380 1820L260 1790zM310 1590L540 1590L560 1640L480 1640L320 1625z" fill="#c8c6b4"/>
        <path d="M275 1770L430 1740L480 1760L380 1830zM340 1600L470 1600L520 1640L360 1620z" fill="url(#town)"/>
        <!-- Naardermeer reserve -->
        <path d="M850 1850L760 1880L720 1920L705 2010L670 2080L720 2120L800 2150L860 2150L960 2220L1060 2230L1140 2140L1150 2060L1100 2000L1040 1960L960 1900L910 1855z" fill="#b3daa3" stroke="#7cbb98" stroke-width="2.500"/>
        <path d="M850 1850L740 1910L725 2070L830 2130L850 2050L800 1960zM860 2040L1000 2160L940 2060z" fill="url(#marsh)"/>
        <path d="M860 1885L910 1880L925 1950L1010 2010L1050 2050L990 2080L900 2060L880 1990L850 1930zM990 2130L1060 2100L1050 2170L1000 2180z" fill="#aad3df"/>
        <!-- lakes in the south -->
        <path d="M390 2465L375 2255L500 2230L630 2230L720 2200L900 2215L945 2260L925 2350L840 2400L600 2400L530 2430z" fill="#aad3df"/>
        <path d="M540 2290L700 2260L930 2250L925 2350L840 2400L560 2390z" fill="#b9dfb0" opacity=".6"/><path d="M540 2290L700 2210L930 2250L925 2350L840 2400L560 2390z" fill="url(#marsh)"/>
        <path d="M1180 2010L1260 1980L1340 2000L1350 2090L1300 2110L1220 2080z" fill="#aad8e0"/>
        <path d="M1140 2280L1460 2280L1600 2330V2380L1400 2420L1280 2360L1180 2330z" fill="url(#town)"/><path d="M1060 2270L1140 2280L1110 2400L1050 2340z" fill="#d5d4d2"/>
        <path d="M1460 2050L1600 2030V2320L1450 2200z" fill="url(#lines)"/><path d="M1450 2060L1600 2200V2290L1460 2260z" fill="url(#town)"/>
        <path d="M960 2440H1120V2540H960zM1120 2400H1290V2540H1130zM1190 2390L1280 2370V2410z" fill="url(#wood)"/><path d="M1380 2400L1600 2350V2540H1340z" fill="#d3d69a"/>
        <g fill="none">
          <path d="M330 195L375 232L540 248L765 283M768 280L800 262" stroke="#7cbb98" stroke-width="3.500"/>
          <path d="M755 375L745 440L735 490L700 535" stroke="#86bf8e" stroke-width="6"/>
          <path d="M0 1250Q140 1245 210 1200L250 1162L295 1172L303 1400L120 1465" stroke="#7cbb98" stroke-width="3"/>
          <path d="M545 1570V1540Q640 1490 760 1485Q880 1500 960 1590L1080 1700" stroke="#7cbb98" stroke-width="3.500"/>
          <path d="M1541 650L1380 860M1568 670L1520 740M1485 820L1530 900L1541 970" stroke="#7cbb98" stroke-width="3"/>
          <path d="M1265 1920L1350 1870L1541 1832H1600" stroke="#7cbb98" stroke-width="3"/>
          <path d="M768 20L808 160" stroke="#b5dcc0" stroke-width="1.500"/>
          <path d="M1045 0L1200 190L1475 737H1090L626 1028V1228L720 1320L1180 1787L1260 1785L1600 1735" stroke="#9b7fa8" stroke-width="2"/>
          <path d="M545 735L585 760L625 1028M626 1030L300 1170M310 1400V1540L220 1560M20 645L145 700L230 690L240 735L280 710L390 745L540 722" stroke="#a596b4" stroke-width="1.500" stroke-dasharray="7 3 2 3"/>
          <path d="M679 28L672 222L790 275M20 1275L200 1240L400 1270L543 1305L547 1600" stroke="#7d8fe8" stroke-width="1.600" stroke-dasharray="7 5"/>
          <path d="M165 1940V2180L190 2190L235 2115L335 2180L395 2125L425 2135L470 2105L510 2150L520 2210" stroke="#9a83a5" stroke-width="2"/>
          <path d="M165 1950L172 2260L215 2350L210 2380L255 2430L245 2460L275 2505L320 2460L345 2480L350 2530M250 2280L330 2225L385 2240L400 2180L470 2150L498 2150L515 2210M0 2040L60 1950" stroke="#9a8bb5" stroke-width="3"/>
          <path d="M120 1640L160 1900L172 2250L100 2530" stroke="#9dcbd8" stroke-width="6"/><path d="M176 1940L178 2260L112 2530" stroke="#fff" stroke-width="2"/>
          <path d="M490 1730L515 1780L410 1820L395 1850L440 1880M400 1960L470 2030L600 2015L640 2050L560 2080" stroke="#a3cfdd" stroke-width="4"/>
          <g stroke="#fff" stroke-width="1.800"><path d="M0 110L90 155L240 195L275 260M20 165L70 140M20 310L100 270L200 265M390 165L330 185L280 188M20 530L120 525L255 553L365 500L370 470M255 555L325 600L500 540L505 510M325 600L280 630L300 655L450 690L560 690L570 700M1340 1055L1440 1085M1460 1110L1530 1180M1470 1230L1568 1200M1460 1290L1568 1260M1180 1560Q1250 1490 1330 1530M100 1640L420 1643L425 1670M600 1680L710 1740L830 1780L880 1700M920 1850L1060 1910M1060 2310L1120 2320L1130 2370L1090 2410M275 1780L320 1765L370 1800M1290 2280L1400 2400"/></g>
          <g stroke="#b9b4c4" stroke-width="1"><path d="M195 760L190 850L140 930L20 945M190 850L270 830L280 870M20 415L130 540M1100 1060L1200 1170L1270 1200L1300 1290M1180 1110L1250 1190M700 1900L820 2200L1130 2220M500 2225L640 2228L690 2190L860 2210"/></g>
          <g stroke="#f4efa0" stroke-width="3.500"><path d="M755 372Q770 330 830 305M745 380L740 470L700 530M372 460L385 485L500 500L600 512L685 515M1568 785L1380 862M1290 910L1250 985L1110 1055L1000 1115L972 1150L990 1210L1045 1275L1055 1360L1180 1540L1220 1620L1340 1540L1345 1450L1380 1440M1060 1380L1220 1330L1230 1310L1290 1280L1350 1285M1105 1660L1170 1700L1210 1630M1450 1110L1490 1160L1568 1210M1450 1300L1568 1345M20 1610L80 1570L125 1500L80 1410L20 1430M155 1730L200 1665Q270 1670 360 1690M155 1730L280 1830M380 1850L380 1810L490 1770L495 1710Q560 1740 640 1725L800 1800M1060 1740V1770L1125 1785L1160 1830L1130 1890L1130 1950L1170 2090M345 2460L380 2250L520 2210L590 2090M850 2265L770 2400L740 2530M1140 2290L1160 2320L1205 2360L1175 2420M1100 1960L1170 2080M1296 2280L1292 2400M1450 2160L1541 2120M1000 2430L960 2460V2530M345 2460L400 2530"/></g>
          <g stroke="#f0b67f" stroke-width="4"><path d="M233 0L255 170L238 260L210 350L100 470L20 520M20 1885Q60 1890 80 1930L130 1955L350 1965L410 2020L590 2090L680 2090L800 2180L820 2230L940 2280L970 2340L1000 2425H1290L1300 2360L1440 2330L1520 2280"/></g>
          <path d="M1568 1050L1450 1105L1380 1170L1360 1240L1355 1340L1380 1400" stroke="#ef9b86" stroke-width="5"/>
          <g stroke="#8c8c88" stroke-width="2"><path d="M20 1665L250 1790L430 1930L480 1940Q530 1930 560 1900Q640 1820 720 1810L900 1790L1060 1730L1180 1640Q1215 1580 1210 1500L1280 1410L1370 1350L1568 1280M430 1920L540 1960L740 2060L900 2085L1150 2105M545 1920Q540 1960 570 1975M1270 2270L1340 2530"/></g>
          <g stroke="#e68a9e" stroke-width="6" stroke-linejoin="round"><path d="M20 1640H140L200 1645L400 1685L560 1745L720 1780L810 1820L900 1835L960 1880L1060 1925H1260Q1340 1930 1380 1990L1440 2080L1460 2210L1500 2260L1600 2315M900 1835L1040 1760L1250 1620L1400 1520L1600 1430M0 1750L60 1680L150 1640M790 1835L900 1835"/></g>
        </g>
      </g>
      <!-- strip south of the dialog -->
      <path d="M560 1120H1440V1165H560z" fill="#cbe9af"/>
      <path d="M552 1120H700L690 1165H565z" fill="url(#town)"/><path d="M620 1165L700 1120L730 1165zM860 1120L800 1165H720L860 1120z" fill="#e6e5d8"/>
      <path d="M605 1140h20v14h-20zM735 1135h25v16h-25z" fill="#8fe0c0"/>
      <g fill="none"><path d="M405 1140l30-6M420 1152l60-14M470 1158l50-20M500 1135l25 8" stroke="#b5dcae" stroke-width="5" stroke-dasharray="8 4"/><path d="M552 1125Q565 1140 565 1165M590 1128L680 1165M575 1140L615 1165M820 1120L800 1165M600 1150L570 1165" stroke="#f4efa0" stroke-width="3"/><path d="M615 1165L690 1125M720 1125L750 1142L780 1140L815 1153L855 1165" stroke="#e88a68" stroke-width="5"/><path d="M785 1128L760 1165M1415 1128L1445 1165" stroke="#777" stroke-width="2.500"/><path d="M945 1160L975 1150L985 1160L1010 1150L1030 1158L1055 1150L1090 1160L1130 1155L1140 1130" stroke="#9a83a5" stroke-width="2.500"/><path d="M1058 1130L1072 1155" stroke="#8fca92" stroke-width="8"/><path d="M1160 1130L1175 1165M1200 1130L1190 1165" stroke="#a3cfdd" stroke-width="3"/><path d="M1312 1128L1324 1165" stroke="#e68a9e" stroke-width="6"/><path d="M1360 1160L1380 1130L1410 1145M1240 1130L1260 1160" stroke="#a3cfdd" stroke-width="2.500"/></g>
      <g class="badge"><rect x="1755" y="464" width="41" height="14"/><rect x="2022" y="608" width="41" height="14"/><rect x="1672" y="1033" width="40" height="13"/></g>
      <rect x="2062" y="691" width="40" height="13" fill="#f7c4b4"/><rect x="1750" y="907" width="25" height="15" fill="#f0c0cc"/><rect x="1901" y="1122" width="40" height="13" fill="#fadcbf"/><rect x="2017" y="1152" width="40" height="10" fill="#fadcbf"/>
      <g class="place">
        <text x="1567" y="381" textLength="57" lengthAdjust="spacingAndGlyphs">Katwoude</text><text x="1513" y="420" class="big" textLength="117" lengthAdjust="spacingAndGlyphs">Monnickendam</text><text x="1803" y="417" textLength="42" lengthAdjust="spacingAndGlyphs">Marken</text><text x="1448" y="506" textLength="35" lengthAdjust="spacingAndGlyphs">erland</text><text x="1525" y="513" textLength="77" lengthAdjust="spacingAndGlyphs">Zuiderwoude</text><text x="1671" y="555" textLength="43" lengthAdjust="spacingAndGlyphs">Uitdam</text><text x="1502" y="577" textLength="55" lengthAdjust="spacingAndGlyphs">Holysloot</text><text x="1904" y="707" class="mid2" textLength="101" lengthAdjust="spacingAndGlyphs">Almere Pampus</text><text x="1940" y="808" class="mid2" textLength="86" lengthAdjust="spacingAndGlyphs">Almere Poort</text><text x="1495" y="783" class="it" textLength="70" lengthAdjust="spacingAndGlyphs">Strandeiland</text><text x="1825" y="890" textLength="70" lengthAdjust="spacingAndGlyphs">Muiderberg</text><text x="1665" y="878" textLength="45" lengthAdjust="spacingAndGlyphs">Muiden</text><text x="1467" y="968" textLength="48" lengthAdjust="spacingAndGlyphs">Diemen</text><text x="2001" y="1002" textLength="51" lengthAdjust="spacingAndGlyphs">Naarden</text><text x="1508" y="1081" textLength="63" lengthAdjust="spacingAndGlyphs">Nigtevecht</text><text x="1566" y="1112" textLength="68" lengthAdjust="spacingAndGlyphs">Nederhorst</text><text x="1573" y="1122" textLength="53" lengthAdjust="spacingAndGlyphs">den Berg</text><text x="1767" y="1106" textLength="57" lengthAdjust="spacingAndGlyphs">Ankeveen</text><text x="401" y="1137" textLength="38" lengthAdjust="spacingAndGlyphs">enhout</text><text x="953" y="1139" textLength="42" lengthAdjust="spacingAndGlyphs">Amstel</text>
        <text x="1760" y="475" textLength="31" lengthAdjust="spacingAndGlyphs">N518</text><text x="2027" y="619" textLength="31" lengthAdjust="spacingAndGlyphs">N701</text><text x="2066" y="702" textLength="33" lengthAdjust="spacingAndGlyphs">N702</text><text x="1677" y="1044" textLength="30" lengthAdjust="spacingAndGlyphs">N523</text><text x="1754" y="918" textLength="15" lengthAdjust="spacingAndGlyphs">A1</text><text x="1907" y="1133" textLength="30" lengthAdjust="spacingAndGlyphs">N236</text><text x="2021" y="1161" textLength="31" lengthAdjust="spacingAndGlyphs">N524</text>
      </g>
      <g class="place wat"><text x="1714" y="376" textLength="61" lengthAdjust="spacingAndGlyphs">Gouwzee</text><text x="1666" y="700" class="big" textLength="52" lengthAdjust="spacingAndGlyphs">IJmeer</text><text x="1713" y="1077" textLength="63" lengthAdjust="spacingAndGlyphs">Ankeveense</text><text x="1724" y="1086" textLength="41" lengthAdjust="spacingAndGlyphs">Plassen</text></g>
      <g class="place grn"><text x="1653" y="446" class="mid" textLength="80" lengthAdjust="spacingAndGlyphs">Markermeer</text><text x="1665" y="457" class="mid" textLength="57" lengthAdjust="spacingAndGlyphs">&amp; IJmeer</text><text x="1802" y="852" class="sml" textLength="67" lengthAdjust="spacingAndGlyphs">Markermeer</text><text x="1812" y="861" class="sml" textLength="47" lengthAdjust="spacingAndGlyphs">&amp; IJmeer</text><text x="1807" y="1011" class="mid" textLength="88" lengthAdjust="spacingAndGlyphs">Naardermeer</text><text x="1130" y="1154" textLength="45" lengthAdjust="spacingAndGlyphs">Botshol</text><text x="2045" y="1141" textLength="92" lengthAdjust="spacingAndGlyphs">Bussummerheide</text><text x="2098" y="1159" textLength="40" lengthAdjust="spacingAndGlyphs">Wester</text></g>
      <g class="place pur"><text x="1917" y="562" textLength="84" lengthAdjust="spacingAndGlyphs">Noord-Holland</text><text x="1941" y="577" textLength="55" lengthAdjust="spacingAndGlyphs">Flevoland</text></g>
      <!-- lcz_tiles layer, drawn over the base map -->
      <g transform="translate(1440 320) scale(.45217 .33333)">
        <g fill="url(#dotsM)">
          <path d="M237 267H325V278H345V297H367V328H360V350H367V403H340V413H315V405H265V378H260V385H222V375H208V345H215V332H222V316H237z"/>
          <path d="M797 268H848V308H828V300H818V290H797zM588 570H610V580H605V600H598V608H582V600H575V588H588z"/>
          <path d="M1360 890H1392V905H1400V925H1405V945H1415V960H1428V980H1436V990H1420V997H1410V990H1385V980H1365V970H1352V955H1335V940H1305V930H1320V912H1340V902H1355zM1350 1017H1378V1010H1390V1000H1402V1007H1440V1017H1450V1077H1435V1068H1420V1055H1410V1040H1400V1027H1350z"/>
          <g transform="translate(0 1290)"><path d="M20 165H32V177H60V190H95V205H65V200H45V222H30V212H20zM475 362H490V352H510V332H525V320H567V370H575V385H595V410H588V427H570V420H545V408H540V427H525V420H500V410H490V392H480V378H475zM905 388H930V378H955V388H985V405H1000V425H1012V437H990V447H960V440H930V460H920V477H905V445H915V430H900V415H905zM805 490h8v-13h6v28h-14zM1005 467h8v-10h15v20h-23zM403 340h7v11h-7zM1033 457h9v9h-9zM840 968h8v-6h14v18h-18zM645 730h18v10h-6v8h-6v-8h-6zM1042 612h6v8h-6zM1057 622h6v8h-6z"/></g>
        </g>
        <path d="M240 320h55v15h-15v10h-40zM303 376h12v10h-12zM935 1708h25v8h-25zM345 355h14v18h-14z" fill="#c5e3c5"/>
      </g>
      <g transform="translate(1440 820) scale(.33333)">
        <path fill="url(#dots3)" d="M195 275H228V265H245V256H277V265H290V275H303V295H295V305H310V325H333V315H345V308H352V313H362V306H382V315H410V325H428V316H490V325H508V363H495V375H518V355H568V363H586V383H552V390H533V400H548V410H567V423H518V418H500V445H518V450H545V460H567V490H575V500H557V497H520V490H490V500H480V529H455V523H430V529H400V518H390V470H372V462H293V452H275V440H215V350H205V315H195zM108 412H118V402H138V392H175V402H198V412H203V440H195V451H170V445H160V452H118V440H108zM118 82H135V72H165V62H187V52H205V43H217V52H243V72H235V108H255V123H238V131H188V140H178V160H167V140H148V131H187V121H205V95H178V105H170V112H140V102H133V95H118zM98 43h10v-5h4v-5h6v10h20v10h-18v-5h-12v5h-10zM545 130h12v10h-12zM38 160h12v18h-12zM52 183H70V177H100V198H70V200H52zM50 208h20v10h-10v20H30v-18h12v-10zM145 207h14v10h-14zM195 247h12v11h-12zM137 343h22v12h-22zM166 363h22v11h-22zM175 334h13v22h-13zM215 450h22v12h-22zM127 458h30v10h-30zM40 435h10v-5h20v20H50v-10H40zM263 490h12l-6 12zM50 675h10l-5 14zM226 753H240V763H275V750H290V740H297V733H312V750H332V763H322V773H230V768H226z"/>
        <g stroke="#222" stroke-width="7" stroke-dasharray="8 2" fill="none"><path d="M98 552h32M98 562h32M235 719h20M235 729h20M575 486h38M578 504h20M605 515h10M507 748h28M507 757h22M507 767h12"/></g>
        <path d="M245 385h28v18h38v17h-60v-10h-12v-12h6zM333 393h8v18h-8zM460 385h38v8h-38zM441 446h26v12h-26z" fill="#aad3df"/><path d="M295 365h17v16h-17zM498 473h18v15h-18z" fill="#f0dcae"/><path d="M422 462h26v6h-26z" fill="#f0b67f"/><path d="M313 325h18v7h-18z" fill="#ddd"/>
      </g>
      <g transform="translate(1900 740) scale(.33333)">
        <path fill="url(#dots3)" d="M587 -125H565V-110H545V-100H512V-65H505V-30H480V0H459V38H450V68H495V60H517V70H470V100H478V135H497V165H480V236H500V245H535V254H558V243H587V60H568V42H587zM177 98H222V90H247V80H263V70H295V59H316V78H333V98H345V108H355V128H372V138H345V148H335V168H325V195H307V205H287V235H268V272H255V254H188V236H178V206H160V185H130V155H120V148H90V128H120V118H158V128H172V148H182V165H200V178H235V180H215V150H197V130H177zM402 118H447V128H470V150H455V160H470V170H458V177H432V168H422V150H432V142H402zM303 262h32v22h-32zM60 273h22v30H60zM90 282h20v20H90zM110 302h10v8h18v-8h12v10h-10v20h-20v-18h-10zM450 234h11v10h-11zM148 924h11v20h-11zM160 612H168V603H208V615H222V612H267V630H295V642H267V652H215V635H198V633H160zM90 642H100V633H168V661H140V671H120V680H238V690H248V700H275V712H296V730H315V749H290V742H276V770H258V778H218V770H178V750H158V740H140V720H130V710H110V690H110V670H90zM333 768H343V758H390V750H410V768H403V788H373V798H333zM178 838H198V818H218V808H278V818H288V828H308V845H325V838H355V866H420V820H450V800H480V790H518V778H565V768H575V758H588V808H560V818H548V808H515V828H530V846H558V875H568V885H588V1013H265V1005H247V1013H168V935H178zM60 1003H80V993H110V1003H140V1013H60zM158 972h12v12h-12zM0 485h12v22H0zM22 486h12v12H22z"/>
        <path d="M248 115h55v8h-55zM245 92h55v5h-55zM512 215h22v-7h22v18h-20v8h-24zM538 920h18v24h-18z" fill="#d5d4d2"/><path d="M550 68h12v10h12v18h-22zM412 877h18v8h-18zM247 634h10v8h-10z" fill="#aad3df"/><path d="M460 857h20v9h-20zM442 945h18v8h-18zM490 945h18v8h-18zM460 965H508V992H485V980H470zM207 828h20v8h-20z" fill="#e3ebbd"/><path d="M482 810h33v16h-33z" fill="#8fe0c0"/><path d="M68 540l14 14H52z" fill="#d08a50"/>
      </g>
      </g>
      <clipPath id="edge"><rect x="2145" y="326" width="10" height="835"/></clipPath>
      <g clip-path="url(#edge)" transform="translate(-8 5)"><use href="#mapall"/></g>
    </svg>
  </main>

  <footer class="status">
    <span class="locate"><svg><use href="#mag"/></svg><span>Type to locate (Ctrl+K)</span></span>
    <span class="msg">Toggles the editing state of the current layer</span>
    <span class="s-coord">Coordinate</span><span class="field f-coord">52.4804°, 4.7321°</span><svg class="bug"><use href="#bug"/></svg>
    <span class="s-scale">Scale</span><span class="field f-scale"><span>1:73088</span><i class="drop"><i class="arr"></i></i></span><svg class="lock"><use href="#lock"/></svg>
    <span class="s-mag">Magnifier</span><span class="spin sp2"><span>100%</span><i class="ud"></i></span>
    <span class="s-rot">Rotation</span><span class="spin sp2"><span>0.0 °</span><i class="ud"></i></span>
    <span class="cb s-cb"><svg><use href="#tick"/></svg></span><span class="s-ren">Render</span><svg class="globe"><use href="#globe"/></svg><span class="s-epsg">EPSG:4326</span><svg class="chat"><use href="#chat"/></svg>
  </footer>
</div>

<div class="edge"><b>›</b><b>›</b></div>

<section class="dialog">
  <header class="dhead"><svg class="logo"><use href="#qgis"/></svg><span class="t-dlg">Layer Properties - lcz_tiles — 3D View</span><svg class="close" viewBox="0 0 16 16"><path d="M1 1l14 14M15 1L1 15" stroke="#111" stroke-width="1.500"/></svg></header>
  <div class="dbody">
    <div class="side">
      <div class="search"><svg><use href="#mag"/></svg></div>
      <div class="sidecols">
        <ul class="pages">
          <li><svg><use href="#info"/></svg>Information</li><li><svg><use href="#source"/></svg>Source</li><li><svg><use href="#symb"/></svg>Symbology</li><li><svg><use href="#labels"/></svg>Labels</li><li><svg><use href="#masks"/></svg>Masks</li>
          <li class="cur"><svg><use href="#cube"/></svg>3D View</li>
          <li><svg><use href="#diag"/></svg>Diagrams</li><li><svg><use href="#fields"/></svg>Fields</li><li><svg><use href="#form"/></svg>Attributes Form</li><li><svg><use href="#joins"/></svg>Joins</li><li><svg><use href="#aux"/></svg>Auxiliary Storage</li><li><svg><use href="#actions"/></svg>Actions</li><li><svg><use href="#display"/></svg>Display</li><li><svg><use href="#render"/></svg>Rendering</li><li><svg><use href="#clock"/></svg>Temporal</li><li><svg><use href="#eps"/></svg>Variables</li><li><svg><use href="#elev"/></svg>Elevation</li><li><svg><use href="#meta"/></svg>Metadata</li><li><svg><use href="#deps"/></svg>Dependencies</li>
        </ul>
        <div class="vscroll"><span class="sb up"></span><span class="thumb"></span><span class="track"></span><span class="sb dn"></span></div>
      </div>
    </div>
    <div class="gutter"></div>
    <div class="panel">
      <div class="rulebox"><svg><use href="#rule"/></svg><span>Rule-based</span><i class="arr"></i></div>
      <div class="table">
        <div class="thead"><span class="c1">Label</span><span class="c2">Rule</span></div>
        <div class="rule"><span class="cb"><svg><use href="#tick"/></svg></span><span class="lab">LCZs : 5...</span><span class="expr">"LCZ" = 51 OR<br>"LCZ" = 52 OR<br>"LCZ" = 53</span></div>
        <div class="rule"><span class="cb"><svg><use href="#tick"/></svg></span><span class="lab">LCZ : 54,...</span><span class="expr">"LCZ" = 54 OR<br>"LCZ" = 55 OR<br>"LCZ" = 56</span></div>
        <div class="rule"><span class="cb"><svg><use href="#tick"/></svg></span><span class="lab">LCZ: 58, ...</span><span class="expr">"LCZ" = 58 OR<br>"LCZ" = 59 OR<br>"LCZ" = 60</span></div>
      </div>
      <div class="rbtns">
        <span class="btn"><svg viewBox="0 0 24 24"><path d="M8.500 2h7v6.500H22v7h-6.500V22h-7v-6.500H2v-7h6.500z" fill="#fff" stroke="#4f8f56" stroke-width="1.500"/><path d="M12 5v14M5 12h14" stroke="#4f8f56" stroke-width="3.500"/></svg></span>
        <span class="btn"><svg viewBox="0 0 24 24"><path d="M2 1h12l5 5v17H2z" fill="#fff" stroke="#777"/><use href="#pen" x="5" y="1" width="20" height="22"/></svg></span>
        <span class="btn"><svg viewBox="0 0 24 24"><path d="M1.500 7.500h21v9h-21z" fill="#fff" stroke="#ef5a5a" stroke-width="1.500"/><path d="M4 12h16" stroke="#ef4b4b" stroke-width="4"/></svg></span>
      </div>
      <div class="ghead"><i></i><b>Layer Rendering</b></div>
      <div class="group">
        <div class="gr1"><span>Zoom levels count</span><span class="spin sp3"><span>3</span><i class="ud"></i></span></div>
        <div class="gr2"><span class="cb"></span><span>Show bounding boxes of tiles</span></div>
      </div>
      <div class="foot"><span class="btn style"><span>Style</span><i class="arr sm"></i></span><span class="btn">OK</span><span class="btn">Cancel</span><span class="btn">Apply</span><span class="btn">Help</span></div>
    </div>
  </div>
</section>
</body>
</html>
```
FILE: styles.css
```css
* { box-sizing: border-box; }
body { margin: 0; width: 2149px; height: 1200px; overflow: hidden; background: #f0f0f0; font: 16.7px/24px "Open Sans", "Noto Sans", sans-serif; color: #111; position: relative; white-space: nowrap; }
.defs { position: absolute; }
i { font-style: normal; flex: none; }
svg { flex: none; display: block; }
svg text { font-family: "Open Sans", sans-serif; }
h2 { font: inherit; margin: 0; }

.window { display: flex; flex-direction: column; height: 1200px; }
.titlebar { height: 42px; background: #f3f3f3; display: flex; align-items: center; padding: 0 35px 3px 4px; color: #888; }
.t-title { letter-spacing: .2px; }
.logo { width: 24px; height: 24px; margin-right: 6px; }
.winbtns { width: 160px; height: 20px; margin-left: auto; }
.menubar { height: 31px; background: #eee; border-bottom: 2px solid #d0d0d0; display: flex; gap: 23px; padding: 4px 0 0 8px; color: #8f8f8f; }
.toolbar { display: flex; background: linear-gradient(#fafafa, #ededed); border-bottom: 2px solid #b5b5b5; }
.r1 { height: 58px; border-bottom-width: 1px; }
.r2 { height: 59px; padding-top: 1px; }
.r3 { height: 75px; }
.r4 { height: 57px; padding-top: 2px; }
.tleft { width: 1448px; flex: none; display: flex; align-items: center; padding-left: 2px; }
.tright { display: flex; align-items: center; }
.ic { width: 36px; height: 36px; }
.off { opacity: .36; filter: grayscale(.45); }
.handle { width: 6px; height: 28px; background: radial-gradient(circle, #aaa 1px, transparent 1.3px) 0 0 / 5px 5px; }
.arr { width: 12px; height: 8px; background: #555; clip-path: polygon(0 0, 100% 0, 50% 100%); }
.arr.g { background: #999; }
.arr.sm { width: 9px; height: 6px; }
.more { width: 14px; font: 400 24px/24px "Open Sans", sans-serif; color: #333; text-align: center; margin-top: -5px; text-indent: -1px; }
.more.up { margin-top: -21px; }
.press { background: #dcdcdc; border: 1px solid #999; border-radius: 3px; height: 46px; display: flex; align-items: center; justify-content: center; }
.pcut { width: 14px; border-left: 0; } .pcut svg { width: 14px; height: 40px; }
.parr { width: 18px; } .pcall { width: 48px; }
.bars { width: 16px; height: 18px; }
.m1{margin-left:1px}.m2{margin-left:2px}.m3{margin-left:3px}.m6{margin-left:6px}.m7{margin-left:7px}.m8{margin-left:8px}.m9{margin-left:9px}.m10{margin-left:10px}.m11{margin-left:11px}.m12{margin-left:12px}.m13{margin-left:13px}.m14{margin-left:14px}.m15{margin-left:15px}.m20{margin-left:20px}.m29{margin-left:29px}.m49{margin-left:49px}.m51{margin-left:51px}.m63{margin-left:63px}.m69{margin-left:69px}.m410{margin-left:410px}

.spin { display: flex; height: 31px; background: #fff; border: 1.5px solid #aaa; border-radius: 3px; align-items: stretch; }
.spin > span { flex: 1; padding-left: 7px; line-height: 30px; }
.ud { width: 22px; border-left: 1px solid #aaa; background: #f7f7f7; display: flex; flex-direction: column; align-items: center; justify-content: center; gap: 4px; }
.ud::before, .ud::after { content: ""; width: 11px; height: 7px; background: #666; clip-path: polygon(50% 0, 100% 100%, 0 100%); }
.ud::after { clip-path: polygon(0 0, 100% 0, 50% 100%); }
.dim { color: #777; background: #f2f2f2; }
.dim .ud::before, .dim .ud::after { background: #999; }
.sp1 { width: 75px; height: 33px; }
.sp1 > span { line-height: 32px; }
.combo { width: 128px; height: 33px; border: 1.500px solid #b5b5b5; border-radius: 3px; display: flex; align-items: center; justify-content: space-between; padding: 0 11px 0 6px; background: linear-gradient(#fbfbfb, #eee); letter-spacing: .15px; }

.work { height: 839px; display: flex; border-bottom: 1px solid #aaa; }
.dock { width: 401px; flex: none; display: flex; flex-direction: column; }
.ph { height: 35px; padding-top: 5px; }
.lay { height: 36px; padding-top: 6px; }
.bro { padding-top: 0; }
.ptools { height: 41px; display: flex; align-items: center; gap: 13.900px; padding: 0 0 4px 5px; border-bottom: 1px solid #bbb; }
.ptools svg { width: 24px; height: 25px; }
.ptools .arr { margin-left: -6px; }
.layers { height: 457px; background: #fff; padding-top: 1px; }
.lrow { height: 27.5px; display: flex; align-items: center; }
.lrow.sel, .trow.sel { background: #efefef; }
.lrow b { color: #000; }
.exp { width: 12px; height: 8px; margin: 0 13px 0 4px; }
.exp.down { background: #555; clip-path: polygon(0 0, 100% 0, 50% 100%); }
.cb { width: 21px; height: 21px; background: #fff; border: 1.500px solid #b2b2b2; flex: none; display: flex; }
.cb svg { width: 100%; height: 100%; }
.swatch { width: 24px; height: 24px; background: #e15989; border: 1px solid #8d4560; margin: 0 9px; }
.ras { width: 21px; height: 20px; margin: 0 10px 0 11px; }
.split { height: 15px; background: radial-gradient(circle, #aaa 1px, transparent 1.3px) 182px 3px / 5px 5px no-repeat; }
.btools { height: 36px; padding-bottom: 9px; margin-top: -1px; }
.tree { height: 183px; background: #fff; padding-top: 2px; }
.trow { height: 27px; display: flex; align-items: center; padding-left: 75px; letter-spacing: .1px; }
.trow.out { padding-left: 51px; }
.trow svg { width: 22px; height: 20px; margin: 0 10px 0 13px; }
.tri { width: 8px; height: 11px; background: #555; clip-path: polygon(0 0, 100% 50%, 0 100%); }
.tri.none { background: none; }
.hscroll { height: 19px; background: #f4f4f4; margin-top: -1px; }
.hscroll span { display: block; width: 15px; height: 19px; background: #fafafa; border-right: 1px solid #aaa; padding: 4px 0 0 1px; }
.hscroll span::before { content: ""; display: block; width: 6px; height: 11px; background: #444; clip-path: polygon(100% 0, 100% 100%, 0 50%); }
.tabs { display: flex; height: 36px; align-items: flex-start; font-size: 16px; }
.tab { width: 172px; height: 33px; border: 1px solid #b0b0b0; border-left: 0; background: #dcdcdc; text-align: center; line-height: 35px; letter-spacing: -.3px; padding-right: 7px; }
.tab.on { width: 95px; height: 35px; background: #f0f0f0; border-top: 0; border-radius: 0 0 3px 3px; line-height: 39px; padding: 0; }
.map { width: 1748px; height: 835px; margin-top: 4px; }
.m path, .m circle, .m ellipse { vector-effect: non-scaling-stroke; }
.badge rect { fill: #eff0cf; stroke: #c5c79a; }
.place { font-size: 10px; fill: #555; stroke: #ffffff90; stroke-width: 1.5px; paint-order: stroke; }
.place .big { font-size: 13px; } .place .mid { font-size: 11px; font-weight: 600; } .place .mid2 { font-size: 11.5px; } .place .sml { font-size: 9px; }
.it, .wat, .grn { font-style: italic; }
.wat { fill: #6a97c4; } .grn { fill: #3f9a55; } .pur { fill: #9a78a8; }

.status { height: 39px; display: flex; align-items: center; padding-top: 7px; font-size: 16px; letter-spacing: -.2px; }
.locate { width: 299px; height: 33px; border: 1.500px solid #aaa; border-radius: 3px; background: #fff; display: flex; align-items: center; color: #777; padding-left: 11px; gap: 11px; }
.locate svg { width: 20px; height: 20px; }
.msg { margin-left: 12px; width: 585px; letter-spacing: -.05px; }
.s-coord { width: 85px; } .f-coord { width: 156px; padding-left: 8px; letter-spacing: .15px; }
.field { height: 33px; border: 1.500px solid #aaa; border-radius: 3px; background: #fdfdfd; display: flex; align-items: center; justify-content: space-between; }
.bug { width: 24px; height: 28px; margin: 0 19px 4px 7px; }
.s-scale { width: 44px; } .f-scale { width: 121px; padding-left: 5px; letter-spacing: .15px; }
.drop { width: 31px; height: 30px; border-left: 1px solid #bbb; display: flex; align-items: center; justify-content: center; }
.lock { width: 20px; height: 24px; margin: 0 12px 0 17px; }
.s-mag { width: 73px; letter-spacing: -.3px; } .sp2 { width: 126px; }
.s-rot { width: 75px; margin-left: 13px; }
.s-cb { margin: 0 8px 3px 10px; }
.s-ren { width: 76px; } .globe { width: 24px; height: 24px; margin-right: 3px; } .s-epsg { width: 115px; } .chat { width: 24px; height: 24px; }

.edge { position: absolute; left: 2137px; top: 0; width: 12px; height: 1200px; border-right: 2px solid #b5b5b5; background: linear-gradient(#f3f3f3, #f3f3f3) 0 0 / 12px 331px no-repeat, linear-gradient(#f0f0f0, #f0f0f0) 0 1166px / 12px 40px no-repeat; }
.edge::before { content: ""; position: absolute; inset: 0 -2px auto 0; height: 327px; background: linear-gradient(#d0d0d0, #d0d0d0) 0 76px / 100% 2px no-repeat, linear-gradient(#b5b5b5, #b5b5b5) 0 135px / 100% 1px no-repeat, linear-gradient(#b5b5b5, #b5b5b5) 0 193px / 100% 2px no-repeat, linear-gradient(#b5b5b5, #b5b5b5) 0 268px / 100% 2px no-repeat, linear-gradient(#b5b5b5, #b5b5b5) 0 325px / 100% 2px no-repeat; }
.edge::after { content: ""; position: absolute; right: -2px; top: 0; width: 11px; height: 6px; background: #000; clip-path: polygon(0 0, 100% 0, 100% 100%, 60% 40%); }
.edge b { position: absolute; left: 1px; top: 219px; font-size: 24px; font-weight: 400; }
.edge b + b { top: 285px; }

.dialog { position: absolute; left: 209px; top: 29px; width: 1240px; height: 1101px; border: 1px solid #9a9a9a; border-radius: 11px; background: #f0f0f0; overflow: hidden; box-shadow: 0 24px 52px rgba(0,0,0,.42), 0 0 8px rgba(0,0,0,.15); display: flex; flex-direction: column; }
.dhead { height: 43px; flex: none; background: #f3f3f3; display: flex; align-items: center; padding: 0 17px 2px 11px; }
.dhead .logo { margin-right: 5px; }
.t-dlg { letter-spacing: .22px; }
.close { width: 15px; height: 15px; margin-left: auto; }
.dbody { display: flex; flex: 1; min-height: 0; }
.side { width: 529px; display: flex; flex-direction: column; background: #5d5d5d; }
.search { height: 33px; flex: none; background: #fff; border: 2px solid #8a8a8a; border-left-width: 1px; border-radius: 0 3px 3px 0; display: flex; align-items: center; padding-left: 12px; }
.search svg { width: 20px; height: 20px; }
.sidecols { display: flex; flex: 1; min-height: 0; padding-top: 9px; }
.pages { list-style: none; margin: 0; padding: 0; width: 509px; height: 1015px; overflow: hidden; color: #fff; letter-spacing: .08px; }
.pages li { height: 54px; display: flex; align-items: center; padding: 1px 0 0 7px; }
.pages li svg { width: 37px; height: 37px; margin-right: 11px; }
.pages li.cur { background: #f0f0f0; color: #111; padding-left: 10px; }
.pages li.cur svg { height: 40px; width: 37px; margin-right: 12px; }
.vscroll { width: 20px; display: flex; flex-direction: column; background: #fff; }
.sb { height: 20px; display: flex; align-items: center; justify-content: center; border-bottom: 1px solid #bbb; background: #fbfbfb; }
.sb::before { content: ""; width: 12px; height: 7px; background: #444; clip-path: polygon(50% 0, 100% 100%, 0 100%); }
.sb.dn { border-bottom: 0; height: 21px; border-top: 1px solid #bbb; }
.sb.dn::before { clip-path: polygon(0 0, 100% 0, 50% 100%); }
.thumb { height: 797px; background: linear-gradient(90deg, #fff, #eee); border-bottom: 1px solid #aaa; }
.track { flex: 1; background: #e4e4e4; }
.gutter { width: 8px; padding: 517px 0 0 3px; }
.gutter::before { content: ""; display: block; height: 25px; border-left: 2px dotted #bbb; }
.panel { width: 697px; padding-top: 5px; display: flex; flex-direction: column; }
.rulebox { height: 36px; border: 1.500px solid #aaa; border-radius: 3px; background: linear-gradient(#fdfdfd, #ececec); display: flex; align-items: center; padding: 0 10px 0 9px; letter-spacing: -.25px; }
.rulebox svg { width: 22px; height: 22px; margin-right: 4px; } .rulebox .arr { margin-left: auto; }
.table { height: 772px; margin-top: 10px; background: #fff; border-bottom: 1px solid #aaa; }
.thead { height: 30px; background: linear-gradient(#fcfcfc, #eaeaea); border-bottom: 1.500px solid #aaa; display: flex; line-height: 31px; letter-spacing: -.4px; }
.c1 { width: 149px; padding-left: 3px; border-right: 1px solid #bbb; } .c2 { padding-left: 4px; }
.rule { height: 72px; display: flex; font-size: 16.700px; }
.rule .cb { margin: 26px 9px 0 34px; } .lab { width: 91px; letter-spacing: -.05px; padding-top: 1px; } .expr { padding-top: 1px; letter-spacing: .45px; }
.rbtns { display: flex; gap: 10px; margin-top: 11px; }
.btn { width: 120px; height: 34px; border: 1.500px solid #aaa; border-radius: 3px; background: linear-gradient(#fff, #efefef); display: flex; align-items: center; justify-content: center; letter-spacing: -.3px; color: #111; }
.rbtns .btn { width: 41px; height: 36px; } .rbtns svg { width: 23px; height: 24px; }
.ghead { display: flex; align-items: center; height: 36px; padding-left: 4px; gap: 12px; color: #000; }
.ghead i { width: 16px; height: 11px; background: #333; clip-path: polygon(0 0, 100% 0, 50% 100%); margin-top: 5px; } .ghead b { margin-top: 3px; }
.group { height: 105px; border: 1.500px solid #d5d5d5; background: #ececec; padding: 15px 17px 0 16px; letter-spacing: -.3px; font-size: 16.300px; }
.gr1 { display: flex; justify-content: space-between; align-items: center; height: 31px; } .sp3 { width: 325px; }
.gr2 { display: flex; align-items: center; gap: 8px; margin-top: 12px; height: 24px; }
.foot { display: flex; margin-top: 8px; gap: 9px; font-size: 16.300px; }
.style { border-color: #4aa3e8; background: linear-gradient(#fff, #dfe9f1); margin-right: 60px; gap: 34px; padding-left: 25px; }
```
